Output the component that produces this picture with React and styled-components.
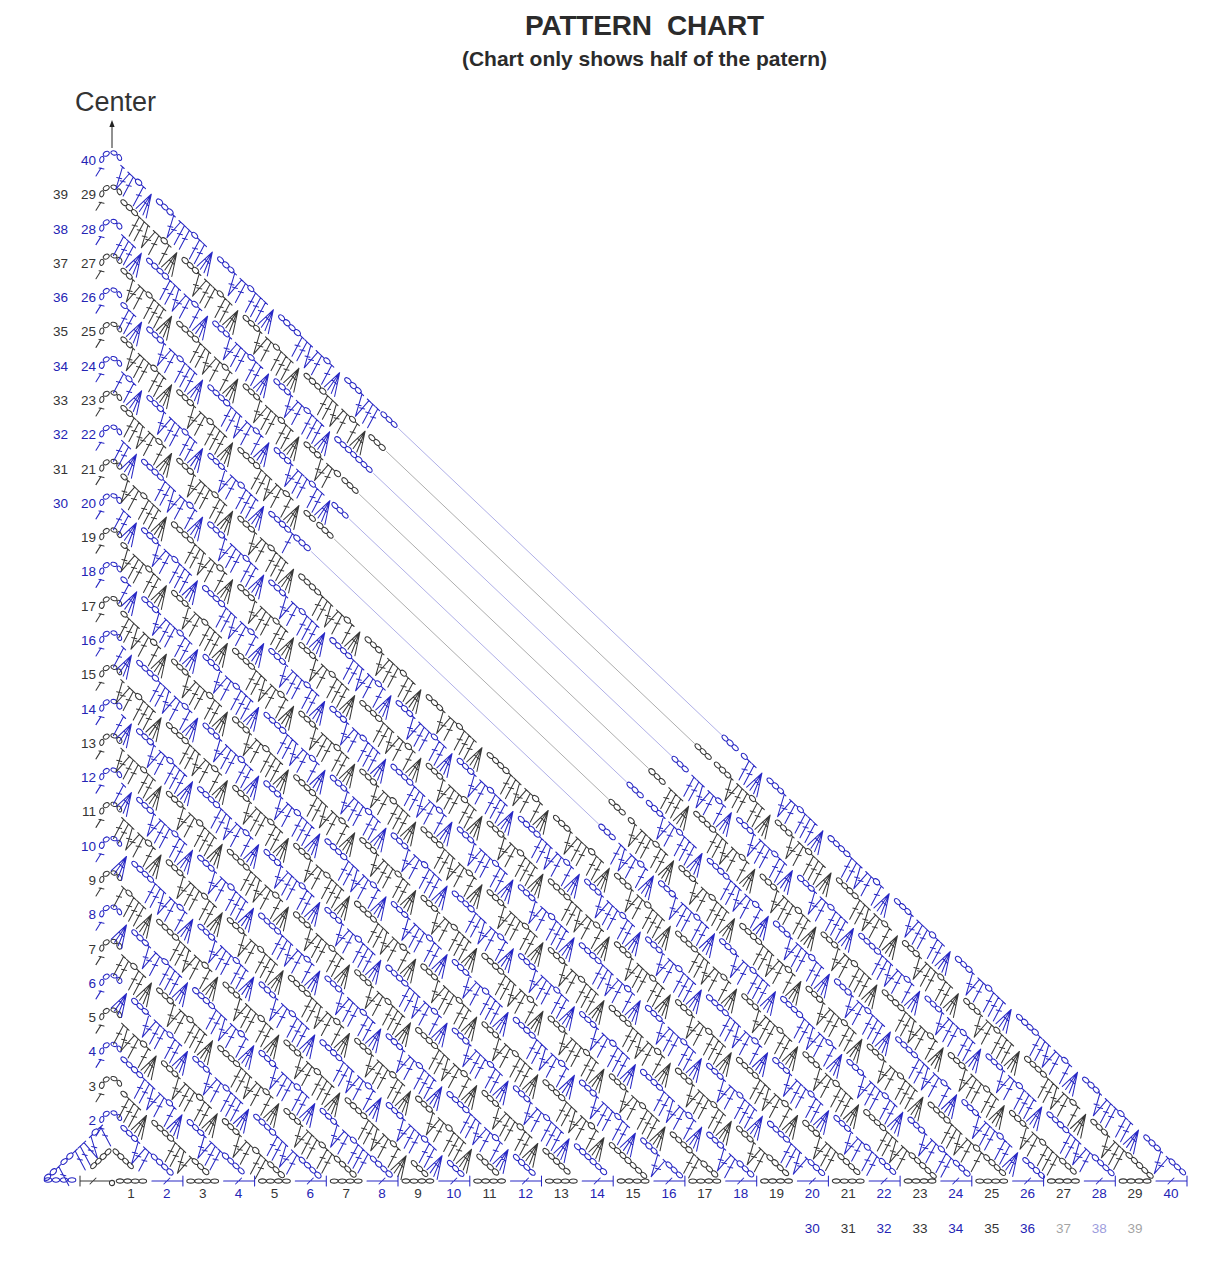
import React, { useMemo } from 'react'
import styled, { createGlobalStyle } from 'styled-components'

const GlobalStyle = createGlobalStyle`
  html, body {
    margin: 0;
    padding: 0;
    background: #ffffff;
  }
  body {
    font-family: "Liberation Sans", Arial, sans-serif;
    color: #2e2e2e;
  }
`

const Page = styled.div`
  width: 1231px;
  height: 1273px;
  overflow: hidden;
  background: #fff;
`

const Header = styled.header`
  padding: 12px 0 0 58px;
  text-align: center;
`

const Title = styled.h1`
  margin: 0;
  font-size: 28px;
  line-height: 28px;
  font-weight: 700;
  letter-spacing: -0.2px;
  color: #2b2b2b;
`

const Subtitle = styled.div`
  margin-top: 8px;
  font-size: 21px;
  line-height: 21px;
  font-weight: 700;
  color: #2b2b2b;
`

const CenterLabel = styled.div`
  margin-top: 20px;
  padding-left: 75px;
  font-size: 27px;
  line-height: 27px;
  color: #333;
`

const ChartSvg = styled.svg`
  display: block;
  width: 1231px;
  height: 1157px;
`

const RowLabel = styled.text`
  font-family: "Liberation Sans", Arial, sans-serif;
  font-size: 13.5px;
  fill: ${p => (p.$blue ? '#2424b4' : '#353535')};
  opacity: ${p => p.$faded || 1};
`

const BLUE = '#2828c4'
const GRAY = '#383838'

// band geometry
const SLOPE = 0.948
const TH = Math.atan(SLOPE)
const COS = Math.cos(TH)
const SIN = Math.sin(TH)
const DX = -0.47
const DY = 0.883
const WX = 0.97
const WY = 0.24
const STEM = 21.5

const yL = p => 1120 - (p - 2) * 34.286
const xB = p => 131 + (p - 1) * 35.862
const isBlue = p => p % 2 === 0

const GAPS = {
  30: [397, 725],
  29: [385, 698],
  28: [372, 675],
  27: [358, 652],
  26: [348, 630],
  25: [333, 612],
  24: [310, 602],
}

const SEQ = 'cccVddcddAcccVdcdddAccccddVdcdA'
const WIDTH = { c: 7.2, d: 6, V: 12.5, A: 14 }

const f = n => n.toFixed(1)
const line = (a, b) => `M${f(a[0])},${f(a[1])}L${f(b[0])},${f(b[1])}`

function oval(c, ux, uy, rx = 3.6, ry = 2.2) {
  const deg = (Math.atan2(uy, ux) * 180) / Math.PI
  const a = [c[0] - ux * rx, c[1] - uy * rx]
  const b = [c[0] + ux * rx, c[1] + uy * rx]
  return `M${f(a[0])},${f(a[1])}A${rx},${ry},${f(deg)},1,0,${f(b[0])},${f(b[1])}A${rx},${ry},${f(deg)},1,0,${f(a[0])},${f(a[1])}`
}

function makeFrame(sx, sy, ux, uy, dx, dy) {
  const P = (s, k) => [sx + ux * s + dx * k, sy + uy * s + dy * k]
  const slash = m => line([m[0] - 2.6 * WX, m[1] - 2.6 * WY], [m[0] + 2.6 * WX, m[1] + 2.6 * WY])
  return {
    P,
    chain: s => oval(P(s, 0), ux, uy),
    dc: s => {
      const m = P(s, STEM * 0.45)
      return line(P(s, 0), P(s, STEM)) + line(P(s - 2.8, 0), P(s + 2.8, 0)) + slash(m)
    },
    shell: s => {
      const base = P(s, STEM)
      let d = ''
      for (const o of [-4.8, 4.8]) {
        const top = P(s + o, 0)
        d += line(base, top) + line(P(s + o - 2.3, 0), P(s + o + 2.3, 0))
        d += slash([(base[0] + top[0]) / 2, (base[1] + top[1]) / 2])
      }
      return d
    },
    cluster: s => {
      const top = P(s, 0)
      let d = ''
      for (const o of [-7, -2.5, 2.5, 7]) d += line(P(s + o, STEM), top)
      d += line(P(s - 3.5, STEM * 0.5), P(s + 3.5, STEM * 0.5))
      return d
    },
  }
}

function buildBand(p) {
  const sx = 112
  const sy = yL(p) - 3
  const sEnd = (1178 - sy) / SIN
  // stitches whose base would drop below the base row are left out
  const sStitch = (1181 - DY * STEM - sy) / SIN
  const F = makeFrame(sx, sy, COS, SIN, DX, DY)
  const gap = GAPS[p]
  const ga = gap ? (gap[0] - sx) / COS : Infinity
  const gb = gap ? (gap[1] - sx) / COS : Infinity
  let d = ''
  let thin = null

  // turning chain arch
  const cx = 111
  const cy = yL(p) + 2
  for (const a of [165, 120, 72, 28]) {
    const r = (a * Math.PI) / 180
    const c = [cx + 9.5 * Math.cos(r), cy - 9.5 * Math.sin(r)]
    d += oval(c, Math.sin(r), Math.cos(r), 3.1, 2)
  }
  d += line([101, yL(p) + 8], [96, yL(p) + 16]) + line([99, yL(p) + 8], [104, yL(p) + 9])

  let s = 13
  let i = (p * 5) % SEQ.length
  let jumped = false
  while (s < sEnd - 6) {
    if (!jumped && s > ga - 26) {
      for (let j = 0; j < 3; j++) d += F.chain(ga - 18 + j * 7)
      thin = line(F.P(ga + 2, 0), F.P(gb - 5, 0))
      s = gb
      for (let j = 0; j < 3; j++) d += F.chain(s + j * 7)
      s += 3 * 7 + 2
      jumped = true
      continue
    }
    let t = SEQ[i % SEQ.length]
    i++
    if (t !== 'c' && s + WIDTH[t] > sStitch) t = 'c'
    const w = WIDTH[t]
    const at = s + w / 2
    if (at + w / 2 > sEnd) break
    if (t === 'c') d += F.chain(at)
    else if (t === 'd') d += F.dc(at)
    else if (t === 'V') d += F.shell(at)
    else d += F.cluster(at)
    s += w + (t === 'c' ? 0 : 0.8)
  }
  return { d, thin }
}

function buildCorner() {
  // blue row 2 descending to the left of the center line
  const F = makeFrame(110, 1118, -COS, SIN, -DX, DY)
  let blue = ''
  const seq = 'dcVddccdcc'
  let s = 10
  for (const t of seq) {
    const w = WIDTH[t]
    const at = s + w / 2
    if (t === 'c') blue += F.chain(at)
    else if (t === 'd') blue += F.dc(at)
    else blue += F.shell(at)
    s += w + 0.8
  }
  for (let j = 0; j < 4; j++) blue += oval([48 + j * 8, 1180], 1, 0, 3.8, 2.2)
  // gray row 1 arch
  let gray = ''
  for (let j = 0; j < 4; j++) {
    gray += oval([108 - j * 6.6 * COS, 1152 + j * 6.6 * SIN], -COS, SIN)
    gray += oval([116 + j * 6.6 * COS, 1152 + j * 6.6 * SIN], COS, SIN)
  }
  return { blue, gray }
}

function buildBase() {
  let blue = ''
  let gray = ''
  gray += line([80, 1181], [110, 1181]) + line([80, 1176], [80, 1186]) + line([90, 1184], [96, 1178])
  gray += oval([112, 1183], 1, 0, 2.6, 2.6)
  for (let j = 0; j < 4; j++) gray += oval([120 + j * 7.6, 1181], 1, 0, 3.8, 2.1)
  for (let p = 2; p <= 30; p++) {
    const x = xB(p)
    if (isBlue(p)) {
      blue += line([x - 15, 1181], [x + 16, 1181]) + line([x + 16, 1176], [x + 16, 1186])
      blue += line([x - 3, 1184], [x + 3, 1178])
    } else {
      for (let j = 0; j < 4; j++) gray += oval([x - 12 + j * 8, 1181], 1, 0, 3.9, 2.1)
    }
  }
  return { blue, gray }
}

export default function App() {
  const chart = useMemo(() => {
    const bands = []
    for (let p = 2; p <= 30; p++) bands.push({ p, ...buildBand(p) })
    return { bands, corner: buildCorner(), base: buildBase() }
  }, [])

  const leftLabels = []
  for (let p = 2; p <= 30; p++) {
    const label = p === 30 ? 40 : p
    leftLabels.push(
      <RowLabel key={`in${p}`} x={96} y={yL(p) + 5} textAnchor="end" $blue={isBlue(p)}>
        {label}
      </RowLabel>,
    )
    if (p >= 20 && p <= 29) {
      leftLabels.push(
        <RowLabel key={`out${p}`} x={68} y={yL(p) + 5} textAnchor="end" $blue={isBlue(p)}>
          {p + 10}
        </RowLabel>,
      )
    }
  }

  const bottomLabels = []
  for (let p = 1; p <= 30; p++) {
    const label = p === 30 ? 40 : p
    bottomLabels.push(
      <RowLabel key={`b${p}`} x={xB(p)} y={1198} textAnchor="middle" $blue={isBlue(p)}>
        {label}
      </RowLabel>,
    )
    if (p >= 20 && p <= 29) {
      bottomLabels.push(
        <RowLabel
          key={`b2${p}`}
          x={xB(p)}
          y={1233}
          textAnchor="middle"
          $blue={isBlue(p)}
          $faded={p >= 27 ? 0.45 : 1}
        >
          {p + 10}
        </RowLabel>,
      )
    }
  }

  return (
    <Page>
      <GlobalStyle />
      <Header>
        <Title>PATTERN&nbsp; CHART</Title>
        <Subtitle>(Chart only shows half of the patern)</Subtitle>
      </Header>
      <CenterLabel>Center</CenterLabel>
      <ChartSvg viewBox="0 116 1231 1157">
        <line x1="112" y1="148" x2="112" y2="126" stroke="#222" strokeWidth="1" />
        <polygon points="112,120 109.4,127 114.6,127" fill="#222" />
        <g fill="none" strokeWidth="1.05" strokeLinecap="round">
          {chart.bands.map(b => (
            <React.Fragment key={b.p}>
              {b.thin && (
                <path d={b.thin} stroke={isBlue(b.p) ? '#8c8cdc' : '#8a8a8a'} strokeWidth="0.7" />
              )}
              <path d={b.d} stroke={isBlue(b.p) ? BLUE : GRAY} />
            </React.Fragment>
          ))}
          <path d={chart.corner.blue} stroke={BLUE} />
          <path d={chart.corner.gray} stroke={GRAY} />
          <path d={chart.base.blue} stroke={BLUE} />
          <path d={chart.base.gray} stroke={GRAY} />
        </g>
        {leftLabels}
        {bottomLabels}
      </ChartSvg>
    </Page>
  )
}
